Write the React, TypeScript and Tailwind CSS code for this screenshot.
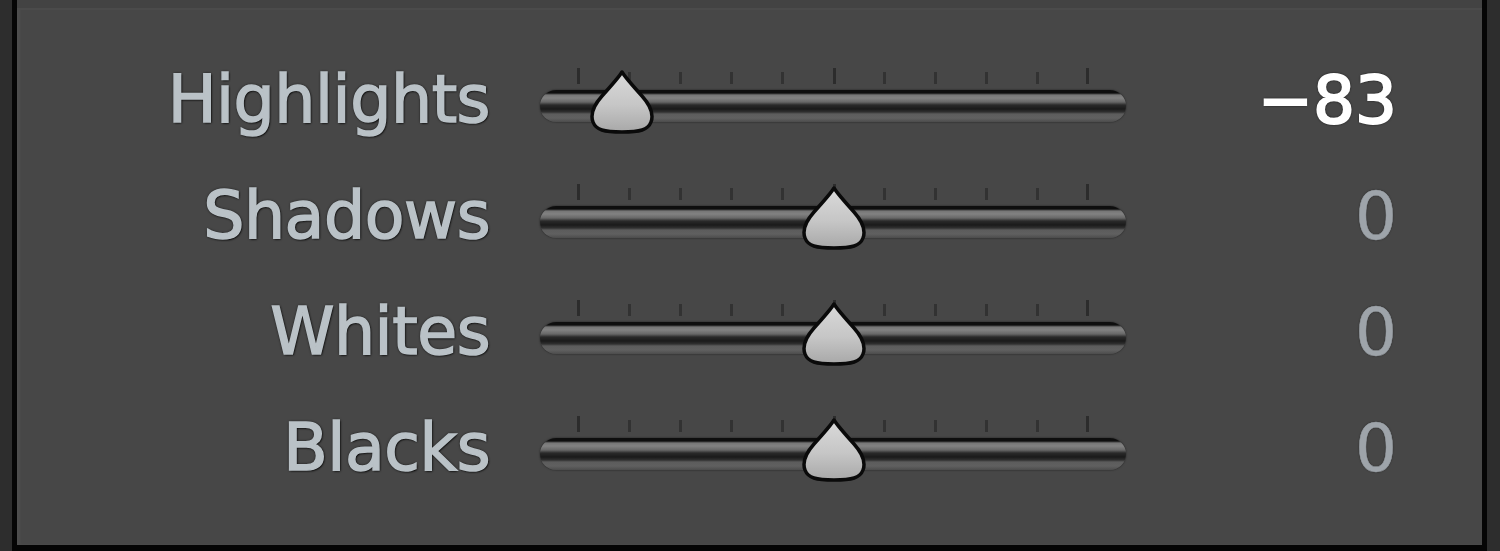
import React from "react";

const TICKS = [38, 89, 140, 191, 242, 294, 344, 395, 446, 497, 547];

function Thumb({ center }: { center: number }) {
  return (
    <svg
      className="absolute top-[6px]"
      style={{ left: center - 35 }}
      width="70"
      height="66"
      viewBox="0 0 70 66"
    >
      <defs>
        <linearGradient id={`tg${center}`} x1="0" y1="0" x2="0" y2="1">
          <stop offset="0" stopColor="#dadada" />
          <stop offset="0.55" stopColor="#c6c6c6" />
          <stop offset="1" stopColor="#a8a8a8" />
        </linearGradient>
      </defs>
      <path
        d="M35 3 C38 8 46 17 55 27 C63 36 67 45 64 53 C61 61 53 63 35 63 C17 63 9 61 6 53 C3 45 7 36 15 27 C24 17 32 8 35 3 Z"
        fill={`url(#tg${center})`}
        stroke="#0a0a0a"
        strokeWidth="3.5"
        strokeLinejoin="round"
      />
    </svg>
  );
}

function Slider({ thumb }: { thumb: number }) {
  return (
    <div className="relative w-[586px] h-[80px] shrink-0">
      {TICKS.map((x, i) => {
        const tall = i === 0 || i === 5 || i === 10;
        return (
          <div
            key={i}
            className={
              tall
                ? "absolute top-[5px] h-[16px] w-[3px] bg-[#2c2c2c]"
                : "absolute top-[9px] h-[12px] w-[3px] bg-[#323232]"
            }
            style={{ left: x - 1 }}
          />
        );
      })}
      <div className="absolute left-0 right-0 top-[27px] h-[32px] rounded-full bg-[linear-gradient(to_bottom,#0e0e0e_0px,#0e0e0e_3px,#767676_5px,#828282_8px,#686868_12px,#2a2a2a_15px,#1a1a1a_19px,#303030_22px,#5c5c5c_24px,#606060_28px,#4c4c4c_32px)] shadow-[0_0_2px_rgba(0,0,0,0.6)]" />
      <Thumb center={thumb} />
    </div>
  );
}

const ROWS = [
  { label: "Highlights", value: "\u221283", thumb: 82, active: true },
  { label: "Shadows", value: "0", thumb: 294, active: false },
  { label: "Whites", value: "0", thumb: 294, active: false },
  { label: "Blacks", value: "0", thumb: 294, active: false },
];

export default function App() {
  return (
    <div className="w-[1500px] h-[551px] bg-[#2d2d2d] flex overflow-hidden">
      <div className="ml-[12px] w-[1475px] h-[551px] bg-[#474747] border-l-[5px] border-r-[5px] border-b-[6px] border-[#050505] flex flex-col shadow-[inset_3px_0_3px_rgba(255,255,255,0.04)]">
        <div className="h-[10px] bg-[#434343] border-b-2 border-[#4b4b4b] shrink-0" />
        <div className="flex flex-col pt-[35px]">
          {ROWS.map((r) => (
            <div key={r.label} className="flex items-center h-[116px]">
              <div
                className="w-[473px] shrink-0 text-right text-[65px] leading-[65px] pb-[7px] tracking-[-0.5px] text-[#bac2c7] [-webkit-text-stroke:1.5px_#bac2c7] [text-shadow:0_0_3px_#000,1px_1px_2px_#000]"
                style={{ fontFamily: '"DejaVu Sans", Verdana, sans-serif' }}
              >
                {r.label}
              </div>
              <div className="w-[50px] shrink-0" />
              <Slider thumb={r.thumb} />
              <div
                className={
                  r.active
                    ? "w-[271px] shrink-0 text-right text-[66px] leading-[66px] pb-[5px] text-white [-webkit-text-stroke:2px_#ffffff] [text-shadow:0_0_3px_#000,0_0_2px_#000]"
                    : "w-[271px] shrink-0 text-right text-[66px] leading-[66px] pb-[5px] text-[#9ea4aa] [-webkit-text-stroke:0.5px_#9ea4aa] [text-shadow:0_0_2px_rgba(0,0,0,0.6)]"
                }
                style={{ fontFamily: '"DejaVu Sans", Verdana, sans-serif' }}
              >
                {r.value}
              </div>
            </div>
          ))}
        </div>
      </div>
    </div>
  );
}
